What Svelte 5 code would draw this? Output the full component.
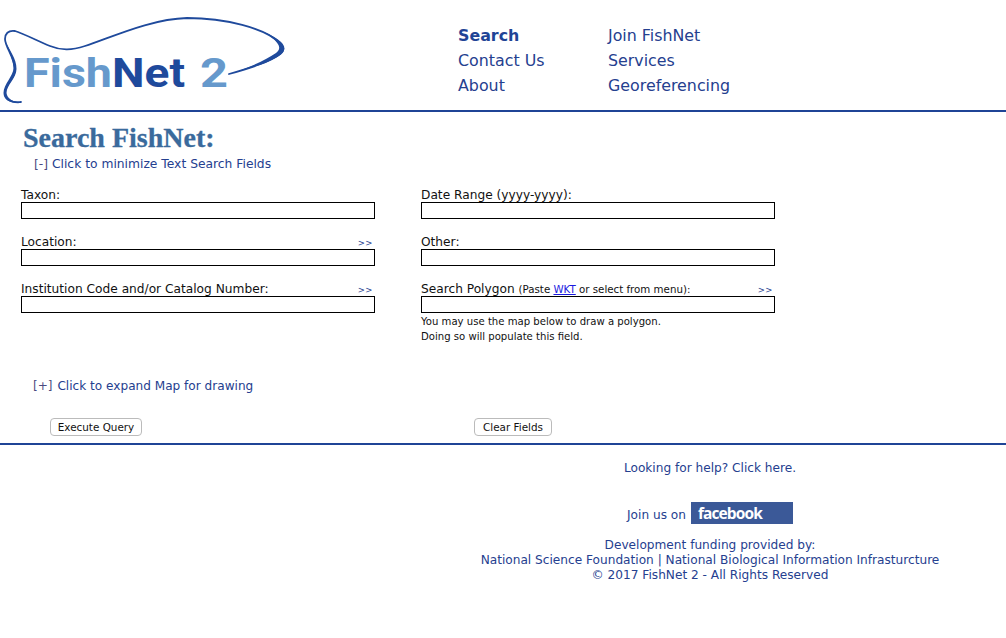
<script>
  const left = [
    { label: 'Taxon:' },
    { label: 'Location:', more: true },
    { label: 'Institution Code and/or Catalog Number:', more: true }
  ];
</script>

<div class="page">
  <header class="header">
    <svg class="logo" width="300" height="110" viewBox="0 0 300 110" aria-label="FishNet 2 logo">
      <path class="fish" d="M229 74 C250 68 270 62 280 54 C285 50 284 47 280 43 C265 28 225 18 187 18 C150 19 110 38 85 46 C72 50 62 51 50 46 C38 41 22 33 15 31 C8 30 5 34 5 39 C5 47 15 58 15 70 C15 78 5 84 5 93 C5 100 12 103 21 102" />
      <path class="taper" d="M236 72 C252 68 271 62 281 54.5 C286 50 285 46 281 42 C277 38 271 35 264 32 C270 36 276 40 278.5 45 C280 48 279 51 276 53 C266 60 252 66 236 72 Z" />
      <path class="taper" d="M6 42 C8 50 13 58 13.5 68 C13.5 76 3.5 84 3.5 93 C3.5 100 11 104 21 103 C14 102 7 99 6.5 93 C6.5 85 16.5 78 16.5 69 C16.5 58 9 50 6 42 Z" />
      <text class="logo-text light" x="24" y="87" textLength="88" lengthAdjust="spacingAndGlyphs">Fish</text>
      <text class="logo-text dark" x="112" y="87" textLength="73" lengthAdjust="spacingAndGlyphs">Net</text>
      <text class="logo-text light" x="200" y="87" textLength="28" lengthAdjust="spacingAndGlyphs">2</text>
    </svg>
    <nav class="nav">
      <a class="active" href="#s">Search</a>
      <a href="#j">Join FishNet</a>
      <a href="#c">Contact Us</a>
      <a href="#v">Services</a>
      <a href="#a">About</a>
      <a href="#g">Georeferencing</a>
    </nav>
  </header>

  <main class="main">
    <h1>Search FishNet:</h1>
    <p class="toggle first"><span class="mark">[-]</span> Click to minimize Text Search Fields</p>

    <div class="fields">
      <div class="col">
        {#each left as f}
          <div class="field">
            <div class="label-row"><label for={f.label}>{f.label}</label>{#if f.more}<span class="more">&gt;&gt;</span>{/if}</div>
            <input id={f.label} />
          </div>
        {/each}
      </div>
      <div class="col">
        <div class="field">
          <div class="label-row"><label for="dr">Date Range (yyyy-yyyy):</label></div>
          <input id="dr" />
        </div>
        <div class="field">
          <div class="label-row"><label for="ot">Other:</label></div>
          <input id="ot" />
        </div>
        <div class="field">
          <div class="label-row"><label for="po">Search Polygon <small>(Paste <a href="#w">WKT</a> or select from menu):</small></label><span class="more">&gt;&gt;</span></div>
          <input id="po" />
          <p class="hint">You may use the map below to draw a polygon.<br />Doing so will populate this field.</p>
        </div>
      </div>
    </div>

    <p class="toggle second"><span class="mark">[+]</span> Click to expand Map for drawing</p>

    <div class="actions">
      <button class="exec">Execute Query</button>
      <button class="clear">Clear Fields</button>
    </div>
  </main>

  <footer class="footer">
    <p class="help">Looking for help? Click here.</p>
    <div class="join"><span>Join us on</span><span class="fb">facebook</span></div>
    <p class="credits">Development funding provided by:<br />National Science Foundation | National Biological Information Infrasturcture<br />© 2017 FishNet 2 - All Rights Reserved</p>
  </footer>
</div>

<style>
  :global(body) { margin: 0; background: #fff; }
  .page { width: 1006px; height: 638px; overflow: hidden; font-family: "DejaVu Sans", Verdana, sans-serif; color: #1f3f8f; }
  .header { height: 110px; display: flex; border-bottom: 2px solid #1f4496; }
  .logo { display: block; flex: none; }
  .fish { fill: none; stroke: #1f4a9c; stroke-width: 1.8; stroke-linecap: round; }
  .taper { fill: #1f4a9c; }
  .logo-text { font-family: Roboto, "DejaVu Sans", sans-serif; font-weight: 700; font-size: 41px; }
  .light { fill: #6699cc; }
  .dark { fill: #1f4a9c; }
  .nav { margin-left: 158px; padding-top: 23px; display: grid; grid-template-columns: 150px 150px; grid-auto-rows: 25px; font-size: 15.85px; line-height: 25px; }
  .nav a { color: #25408f; text-decoration: none; }
  .nav a.active { font-weight: 700; color: #1f4496; }
  .main { box-sizing: border-box; height: 331px; padding: 11px 0 0 21px; position: relative; }
  h1 { margin: 0 0 0 2px; font: 700 28px/30px "Liberation Serif", "Times New Roman", serif; color: #3a6a9c; -webkit-text-stroke: 0.3px #3a6a9c; }
  .toggle { margin: 0; font-size: 12.3px; line-height: 16px; color: #25408f; }
  .mark { color: #4a4a80; }
  .first { margin: 3px 0 0 13px; }
  .fields { display: flex; gap: 46px; margin-top: 15px; }
  .col { width: 354px; display: flex; flex-direction: column; gap: 15px; }
  .field { display: flex; flex-direction: column; }
  .label-row { display: flex; justify-content: space-between; align-items: flex-start; height: 15px; padding-right: 2px; }
  label { font-size: 12.2px; line-height: 16px; color: #111; }
  small { font-size: 10.25px; }
  small a { color: #1a1ae0; }
  .more { align-self: flex-end; font-size: 8.5px; line-height: 11px; color: #25408f; letter-spacing: 0.5px; }
  input { box-sizing: border-box; width: 354px; height: 17px; margin: 0; padding: 0; border: 1px solid #000; background: #fff; display: block; border-radius: 0; outline: none; }
  .hint { margin: 0; font-size: 10.1px; line-height: 15px; color: #111; padding-top: 1px; }
  .second { position: absolute; left: 33px; top: 266px; font-size: 12.1px; }
  .second .mark { margin-right: 1px; }
  .actions { position: absolute; left: 50px; top: 306px; }
  button { position: absolute; top: 0; height: 18px; box-sizing: border-box; padding: 0; background: #fff; border: 1px solid #bbb; border-radius: 4px; font: 10.4px/16px "DejaVu Sans", Verdana, sans-serif; color: #111; white-space: nowrap; }
  .exec { left: 0; width: 92px; }
  .clear { left: 424px; width: 78px; }
  .footer { box-sizing: border-box; border-top: 2px solid #1f4496; text-align: center; padding-left: 414px; width: 1006px; font-size: 12.15px; line-height: 15px; color: #25408f; }
  .footer p { margin: 0; }
  .help { padding-top: 16px; }
  .join { display: flex; justify-content: center; align-items: flex-end; gap: 5px; margin-top: 26px; height: 22px; }
  .join span:first-child { line-height: 15px; padding-bottom: 1px; }
  .fb { width: 102px; height: 22px; box-sizing: border-box; background: #3b5998; color: #fff; font: 700 15.5px/22px "Open Sans", sans-serif; letter-spacing: -0.9px; text-align: left; padding-left: 7px; }
  .credits { margin-top: 14px !important; }
</style>
